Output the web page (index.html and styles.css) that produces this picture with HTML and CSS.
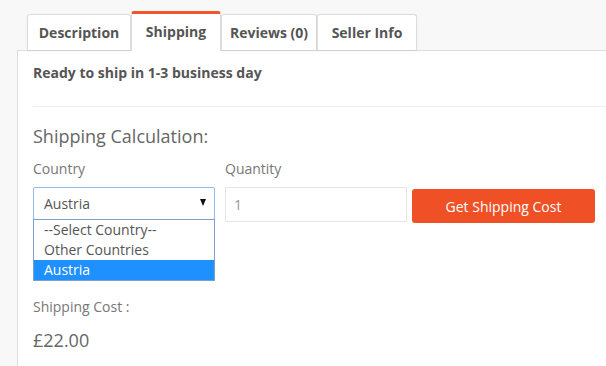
FILE: index.html
```html
<!DOCTYPE html>
<html lang="en">

<head>
    <meta charset="UTF-8">
    <meta name="viewport" content="width=device-width, initial-scale=1.0">
    <title>Shipping</title>
    <link rel="stylesheet" href="styles.css">
</head>

<body>
    <div class="product-tabs">
        <ul class="tab-nav">
            <li class="tab tab-desc">Description</li>
            <li class="tab tab-ship active">Shipping</li>
            <li class="tab tab-reviews">Reviews (0)</li>
            <li class="tab tab-seller">Seller Info</li>
        </ul>
        <div class="tab-panel">
            <p class="ready">Ready to ship in 1-3 business day</p>
            <hr class="divider">
            <h3 class="calc-title">Shipping Calculation:</h3>
            <div class="calc-form">
                <div class="field field-country">
                    <label class="field-label">Country</label>
                    <div class="select-wrap">
                        <div class="select-box">
                            <span>Austria</span>
                            <i class="arrow"></i>
                        </div>
                        <ul class="select-list">
                            <li>--Select Country--</li>
                            <li>Other Countries</li>
                            <li class="selected">Austria</li>
                        </ul>
                    </div>
                </div>
                <div class="field field-qty">
                    <label class="field-label">Quantity</label>
                    <input type="text" class="qty-input" value="1">
                </div>
                <button class="btn-cost">Get Shipping Cost</button>
            </div>
            <p class="cost-label">Shipping Cost :</p>
            <p class="cost-value">£22.00</p>
        </div>
    </div>
</body>

</html>
```

FILE: styles.css
```css
* {
    margin: 0;
    padding: 0;
    box-sizing: border-box;
}

body {
    background: #f8f8f8;
    font-family: "Open Sans", "Liberation Sans", sans-serif;
    color: #555;
}

.product-tabs {
    padding: 11px 0 0 17px;
}

/* tabs */
.tab-nav {
    display: flex;
    align-items: flex-end;
    list-style: none;
    margin-left: 10px;
}

.tab {
    height: 36px;
    line-height: 35px;
    text-align: center;
    border: 1px solid #ddd;
    border-bottom: none;
    border-radius: 3px 3px 0 0;
    background: #fff;
    font-size: 14px;
    font-weight: 700;
    color: #555;
    white-space: nowrap;
    box-shadow: 0 1px 2px rgba(0, 0, 0, 0.08);
}

.tab-desc {
    width: 104px;
}

.tab-ship {
    width: 90px;
}

.tab-reviews {
    width: 96px;
}

.tab-seller {
    width: 100px;
}

.tab.active {
    height: 40px;
    line-height: 36px;
    margin-bottom: -1px;
    border-top: 3px solid #f05428;
    position: relative;
    z-index: 1;
    box-shadow: none;
}

.tab-panel {
    background: #fff;
    border: 1px solid #ddd;
    border-right: none;
    padding: 12px 0 20px 15px;
}

.ready {
    font-size: 14px;
    font-weight: 700;
    line-height: 20px;
    color: #555;
}

.divider {
    border: none;
    border-top: 1px solid #eee;
    margin: 23px 0 16px;
}

.calc-title {
    font-size: 18px;
    font-weight: 400;
    line-height: 26px;
    color: #666;
}

/* form row */
.calc-form {
    display: flex;
    align-items: flex-start;
    margin-top: 10px;
}

.field-label {
    display: block;
    font-size: 14px;
    line-height: 20px;
    color: #777;
    margin-bottom: 8px;
}

.field-country {
    width: 182px;
    margin-right: 10px;
}

.select-wrap {
    position: relative;
}

.select-box {
    height: 33px;
    border: 1px solid #94b9f2;
    border-radius: 2px;
    display: flex;
    align-items: center;
    justify-content: space-between;
    padding: 0 8px 0 10px;
    font-size: 14px;
    line-height: 20px;
    color: #555;
}

.arrow {
    width: 0;
    height: 0;
    border-left: 3.5px solid transparent;
    border-right: 3.5px solid transparent;
    border-top: 7px solid #111;
    margin-top: -2px;
}

.select-list {
    position: absolute;
    top: 32px;
    left: 0;
    width: 182px;
    list-style: none;
    background: #fff;
    border: 1px solid #7f9fd2;
    z-index: 2;
}

.select-list li {
    height: 20px;
    line-height: 20px;
    padding-left: 10px;
    font-size: 14px;
    color: #555;
}

.select-list li.selected {
    background: #1e90ff;
    color: #fff;
}

.field-qty {
    width: 182px;
    margin-right: 5px;
}

.qty-input {
    display: block;
    width: 182px;
    height: 35px;
    border: 1px solid #e5e5e5;
    padding: 0 8px;
    font-family: "Open Sans", "Liberation Sans", sans-serif;
    font-size: 14px;
    color: #999;
    outline: none;
}

.btn-cost {
    width: 183px;
    height: 34px;
    margin-top: 30px;
    border: none;
    border-radius: 3px;
    background: #f05025;
    color: #fff;
    font-family: "Open Sans", "Liberation Sans", sans-serif;
    font-size: 14px;
}

.cost-label {
    margin-top: 74px;
    font-size: 14px;
    line-height: 20px;
    color: #777;
}

.cost-value {
    margin-top: 10px;
    font-size: 18px;
    line-height: 26px;
    color: #666;
}
```
